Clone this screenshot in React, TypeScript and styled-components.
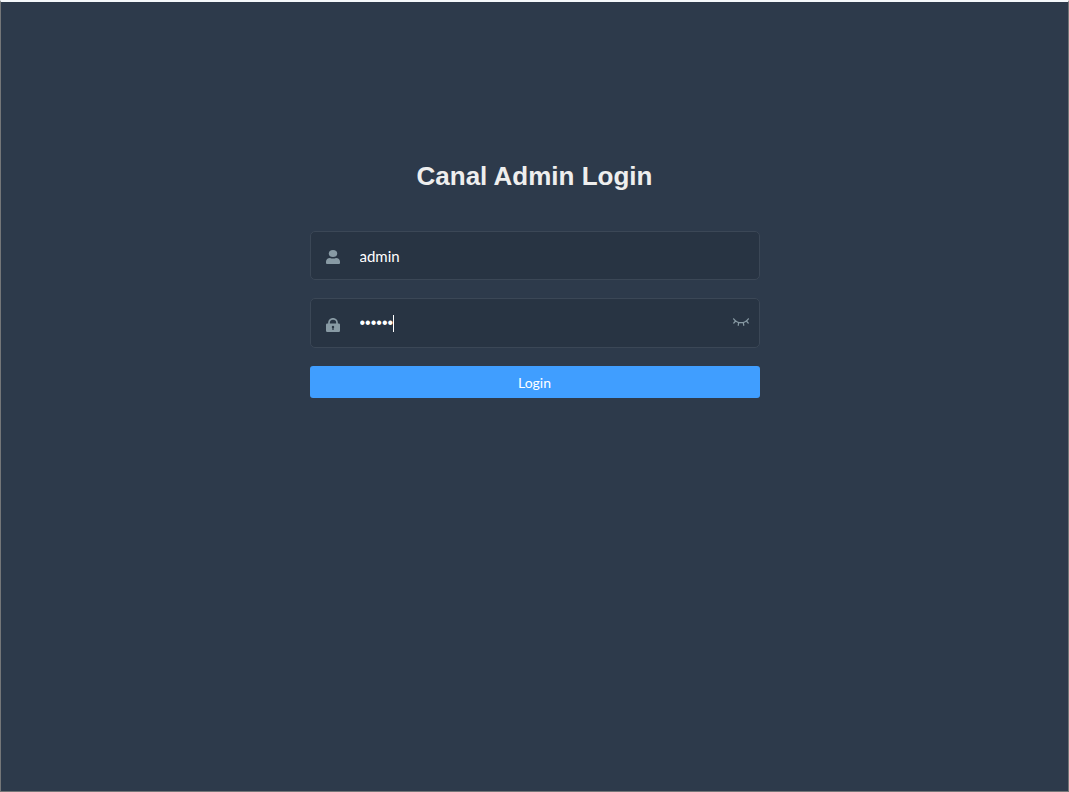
import { useState } from "react";
import styled, { createGlobalStyle } from "styled-components";

const GlobalStyle = createGlobalStyle`
  * { box-sizing: border-box; }
  body { margin: 0; background: #2d3a4b; }
`;

const Page = styled.main`
  min-height: 100vh;
  padding: 159px 35px 0;
  background: #2d3a4b;
  border: 1px solid #747678;
  border-top: 2px solid #f4f8fb;
  font-family: Lato, "Open Sans", sans-serif;
`;

const Form = styled.form`
  display: flex;
  flex-direction: column;
  gap: 18px;
  max-width: 450px;
  margin: 0 auto;
`;

const Title = styled.h1`
  margin: 0 0 22px;
  color: #eee;
  font: bold 26px/30px "Liberation Sans", Arial, sans-serif;
  text-align: center;
`;

const Field = styled.div<{ $tall?: boolean }>`
  display: flex;
  align-items: center;
  height: ${(p) => (p.$tall ? 50 : 49)}px;
  padding: 0 10px 0 15px;
  background: #283443;
  border: 1px solid #3b4756;
  border-radius: 5px;
  cursor: text;
`;

const IconLabel = styled.label`
  display: flex;
  width: 34px;
  padding-top: 3px;
  color: #889aa4;
`;

const Input = styled.input`
  flex: 1;
  min-width: 0;
  height: 47px;
  padding: 0;
  border: 0;
  outline: 0;
  background: transparent;
  color: #fff;
  font: 15px/20px Lato, "Open Sans", sans-serif;
`;

const PasswordInput = styled(Input)`
  flex: none;
  field-sizing: content;
  min-width: 1px;
  caret-color: transparent;
  font: 16px/20px "Liberation Sans", Arial, sans-serif;
`;

const Caret = styled.span`
  width: 1px;
  height: 17px;
  background: #fff;
`;

const EyeButton = styled.button`
  display: flex;
  margin-left: auto;
  padding: 0 0 2px;
  border: 0;
  background: none;
  color: #889aa4;
  cursor: pointer;
`;

const LoginButton = styled.button`
  height: 32px;
  padding: 1px 0 0;
  border: 0;
  border-radius: 3px;
  background: #409eff;
  color: #fff;
  font: 14px/20px Lato, "Open Sans", sans-serif;
  cursor: pointer;
`;

const UserIcon = () => (
  <svg width="14" height="14" viewBox="0 0 14 14" fill="currentColor" aria-hidden="true">
    <ellipse cx="7" cy="3.500" rx="4.200" ry="3.500" />
    <path d="M4 7.900C1.600 7.900 0 9.600 0 11.800V13q0 1 1 1h12q1 0 1-1v-1.200C14 9.600 12.400 7.900 10 7.900 8.200 8.700 5.800 8.700 4 7.900Z" />
  </svg>
);

const LockIcon = () => (
  <svg width="14" height="14" viewBox="0 0 14 14" fill="currentColor" aria-hidden="true">
    <path d="M3 6V4.500a4 3.700 0 0 1 8 0V6" fill="none" stroke="currentColor" strokeWidth="1.700" />
    <path fillRule="evenodd" d="M1.200 5.500h11.600q1.200 0 1.200 1.200v6q0 1.300-1.200 1.300H1.200Q0 14 0 12.700v-6Q0 5.500 1.200 5.500ZM7 7.800a1.300 1.300 0 0 0-.6 2.400V12h1.200v-1.800A1.300 1.300 0 0 0 7 7.800Z" />
  </svg>
);

const EyeIcon = () => (
  <svg width="16" height="8" viewBox="0 0 16 8" fill="none" stroke="currentColor" strokeWidth="1.200" strokeLinecap="round" aria-hidden="true">
    <path d="M.6.8C4.300 6 11.700 6 15.400.8M2.600 3 .8 5M5.700 4.700 5.200 7.300M10.300 4.700l.5 2.600M13.400 3l1.800 2" />
  </svg>
);

export default function App() {
  const [user, setUser] = useState("admin");
  const [password, setPassword] = useState("123456");
  const [visible, setVisible] = useState(false);
  return (
    <>
      <GlobalStyle />
      <Page>
        <Form onSubmit={(e) => e.preventDefault()}>
          <Title>Canal Admin Login</Title>
          <Field>
            <IconLabel htmlFor="username" aria-label="Username"><UserIcon /></IconLabel>
            <Input id="username" value={user} onChange={(e) => setUser(e.target.value)} />
          </Field>
          <Field $tall>
            <IconLabel htmlFor="password" aria-label="Password"><LockIcon /></IconLabel>
            <PasswordInput id="password" type={visible ? "text" : "password"} value={password} onChange={(e) => setPassword(e.target.value)} />
            <Caret />
            <EyeButton type="button" aria-label="Show password" onClick={() => setVisible(!visible)}><EyeIcon /></EyeButton>
          </Field>
          <LoginButton type="submit">Login</LoginButton>
        </Form>
      </Page>
    </>
  );
}
